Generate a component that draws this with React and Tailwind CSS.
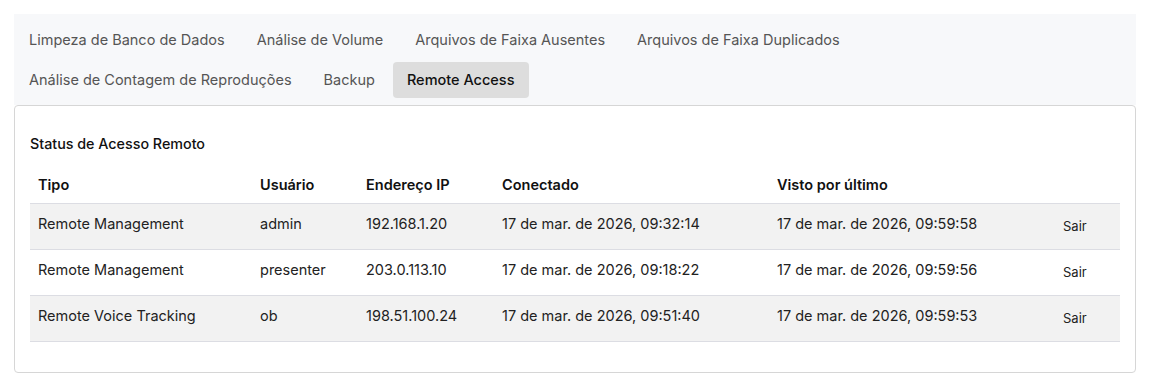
const tabsRow1 = ['Limpeza de Banco de Dados', 'Análise de Volume', 'Arquivos de Faixa Ausentes', 'Arquivos de Faixa Duplicados'];
const tabsRow2 = ['Análise de Contagem de Reproduções', 'Backup', 'Remote Access'];

const sessions = [
  { type: 'Remote Management', user: 'admin', ip: '192.168.1.20', connected: '17 de mar. de 2026, 09:32:14', seen: '17 de mar. de 2026, 09:59:58' },
  { type: 'Remote Management', user: 'presenter', ip: '203.0.113.10', connected: '17 de mar. de 2026, 09:18:22', seen: '17 de mar. de 2026, 09:59:56' },
  { type: 'Remote Voice Tracking', user: 'ob', ip: '198.51.100.24', connected: '17 de mar. de 2026, 09:51:40', seen: '17 de mar. de 2026, 09:59:53' },
];

function Tab({ label, active }) {
  return (
    <button
      className={`h-9 px-[14px] rounded-[4px] text-[14.5px] ${
        active ? 'bg-[#dddddd] text-[#111] font-medium' : 'text-[#555] hover:bg-gray-100'
      }`}
    >
      {label}
    </button>
  );
}

export default function App() {
  return (
    <div className="min-h-screen bg-white p-[14px] font-['Inter',sans-serif]">
      {/* Tabs */}
      <div className="bg-[#f7f8fa] pl-px pt-2 pb-[7px] flex flex-col gap-1">
        <div className="flex gap-1">
          {tabsRow1.map((t) => (
            <Tab key={t} label={t} />
          ))}
        </div>
        <div className="flex gap-1">
          {tabsRow2.map((t) => (
            <Tab key={t} label={t} active={t === 'Remote Access'} />
          ))}
        </div>
      </div>

      {/* Panel */}
      <div className="border border-[#d6d6d6] rounded-[4px] px-[15px] pt-[28px] pb-[30px]">
        <h2 className="text-[14.3px] leading-5 font-medium text-[#111] mb-[13px]">Status de Acesso Remoto</h2>
        <table className="w-full table-fixed border-collapse text-[14.5px]">
          <colgroup>
            <col className="w-[222px]" />
            <col className="w-[106px]" />
            <col className="w-[136px]" />
            <col className="w-[275px]" />
            <col className="w-[286px]" />
            <col />
          </colgroup>
          <thead>
            <tr className="h-[36px] text-left text-[#111]">
              <th className="px-2 pt-px font-semibold">Tipo</th>
              <th className="px-2 pt-px font-semibold">Usuário</th>
              <th className="px-2 pt-px font-semibold">Endereço IP</th>
              <th className="px-2 pt-px font-semibold">Conectado</th>
              <th className="px-2 pt-px font-semibold">Visto por último</th>
              <th className="px-2"></th>
            </tr>
          </thead>
          <tbody className="text-[#222]">
            {sessions.map((s, i) => (
              <tr
                key={s.ip}
                className={`h-[46px] border-t border-b border-[#dcdde3] ${i % 2 === 0 ? 'bg-[#f2f2f2]' : 'bg-white'}`}
              >
                <td className="px-2 pb-1">{s.type}</td>
                <td className="px-2 pb-1">{s.user}</td>
                <td className="px-2 pb-1">{s.ip}</td>
                <td className="px-2 pb-1">{s.connected}</td>
                <td className="px-2 pb-1">{s.seen}</td>
                <td className="px-2 pb-1">
                  <button className="pt-1.5 text-[13px] text-[#222]">Sair</button>
                </td>
              </tr>
            ))}
          </tbody>
        </table>
      </div>
    </div>
  );
}
